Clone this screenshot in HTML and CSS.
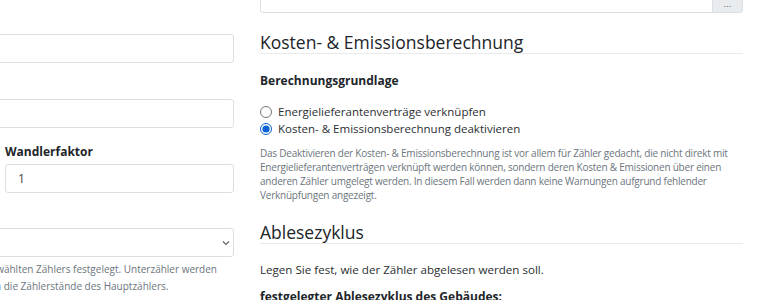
FILE: index.html
```html
<!DOCTYPE html>
<html lang="de">
<head>
  <meta charset="UTF-8">
  <title>Zähler bearbeiten</title>
  <link rel="stylesheet" href="styles.css">
</head>
<body>
  <div class="page">
    <!-- Linke Spalte: Zählerdaten -->
    <div class="col col-left">
      <div class="field">
        <span class="field-label"></span>
        <input class="form-control" type="text">
      </div>
      <div class="field">
        <span class="field-label"></span>
        <input class="form-control" type="text">
      </div>
      <div class="field-row">
        <div class="field">
          <span class="field-label"></span>
          <input class="form-control" type="text">
        </div>
        <div class="field">
          <label class="field-label">Wandlerfaktor</label>
          <input class="form-control" type="text" value="1">
        </div>
      </div>
      <div class="field">
        <span class="field-label"></span>
        <div class="form-select">
          <span></span>
          <svg width="8" height="6" viewBox="0 0 8 6"><path d="M1 1.5 L4 4.5 L7 1.5" fill="none" stroke="#666" stroke-width="1.2"/></svg>
        </div>
        <p class="help help-left">Die Zuordnung wird hier stets nur anhand des ausgewählten Zählers festgelegt. Unterzähler werden<br>dann auch automatisch und anteilig verrechnet durch die Zählerstände des Hauptzählers.</p>
      </div>
    </div>

    <!-- Rechte Spalte: Kosten & Ablesung -->
    <div class="col col-right">
      <div class="input-group">
        <input class="form-control" type="text">
        <button class="btn-more">...</button>
      </div>

      <h3 class="section-title">Kosten- &amp; Emissionsberechnung</h3>
      <div class="label-bold">Berechnungsgrundlage</div>
      <label class="radio"><input type="radio" name="calc"> Energielieferantenverträge verknüpfen</label>
      <label class="radio"><input type="radio" name="calc" checked> Kosten- &amp; Emissionsberechnung deaktivieren</label>
      <p class="help">Das Deaktivieren der Kosten- &amp; Emissionsberechnung ist vor allem für Zähler gedacht, die nicht direkt mit Energielieferantenverträgen verknüpft werden können, sondern deren Kosten &amp; Emissionen über einen anderen Zähler umgelegt werden. In diesem Fall werden dann keine Warnungen aufgrund fehlender Verknüpfungen angezeigt.</p>

      <h3 class="section-title title-second">Ablesezyklus</h3>
      <p class="lead">Legen Sie fest, wie der Zähler abgelesen werden soll.</p>
      <div class="label-bold label-last">festgelegter Ablesezyklus des Gebäudes:</div>
    </div>
  </div>
</body>
</html>
```

FILE: styles.css
```css
/* Allgemein */
body {
  margin: 0;
  font-family: 'Open Sans', 'Noto Sans', sans-serif;
  color: #212529;
  background: #fff;
  overflow: hidden;
}

.page {
  display: grid;
  grid-template-columns: 483px 483px;
  column-gap: 26px;
  margin-left: -249px;
}

/* Formularfelder */
.field-label {
  display: block;
  font-size: 12px;
  font-weight: 700;
  height: 17px;
  line-height: 17px;
  margin-bottom: 4px;
}

.form-control {
  display: block;
  box-sizing: border-box;
  width: 100%;
  height: 29px;
  padding: 0 12px;
  border: 1px solid #dcdfe3;
  border-radius: 3px;
  font-family: inherit;
  font-size: 12px;
  color: #444;
  background: #fff;
}

.field {
  margin-bottom: 15px;
}

.col-left {
  padding-top: 13px;
}

.field-row {
  display: grid;
  grid-template-columns: 1fr 1fr;
  column-gap: 25px;
}

.field-row .field {
  margin-bottom: 14px;
}

.form-select {
  display: flex;
  justify-content: space-between;
  align-items: center;
  box-sizing: border-box;
  height: 29px;
  padding: 0 3px 0 12px;
  border: 1px solid #dcdfe3;
  border-radius: 3px;
}

.help {
  margin: 0;
  font-size: 10px;
  letter-spacing: -0.22px;
  line-height: 14px;
  color: #6c757d;
}

.help-left {
  margin-top: 4px;
  letter-spacing: 0;
  line-height: 17px;
  white-space: nowrap;
}

/* Rechte Spalte */
.col-right {
  margin-top: -16px;
}

.input-group {
  display: flex;
}

.input-group .form-control {
  border-radius: 3px 0 0 3px;
}

.btn-more {
  flex: 0 0 30px;
  height: 29px;
  padding: 10px 0 0;
  border: 1px solid #dcdfe3;
  border-left: none;
  border-radius: 0 3px 3px 0;
  background: #e9ecef;
  color: #555;
  font-size: 9px;
}

.section-title {
  margin: 18px 0 0;
  font-size: 17.5px;
  font-weight: 400;
  line-height: 22px;
  border-bottom: 1px solid #e8eaec;
}

.title-second {
  margin-top: 19px;
}

.label-bold {
  margin-top: 18px;
  font-size: 12px;
  font-weight: 700;
  line-height: 17px;
}

.label-last {
  margin-top: 10px;
}

.radio {
  display: flex;
  align-items: center;
  font-size: 11.5px;
  line-height: 17px;
  color: #2b2f33;
}

.label-bold + .radio {
  margin-top: 14px;
}

.radio input {
  margin: 0 6px 0 0;
  width: 12px;
  height: 12px;
  accent-color: #0b62d6;
}

.radio + .help {
  margin-top: 9px;
}

.lead {
  margin: 17px 0 0;
  font-size: 11.6px;
  line-height: 17px;
  color: #2b2f33;
}
```
